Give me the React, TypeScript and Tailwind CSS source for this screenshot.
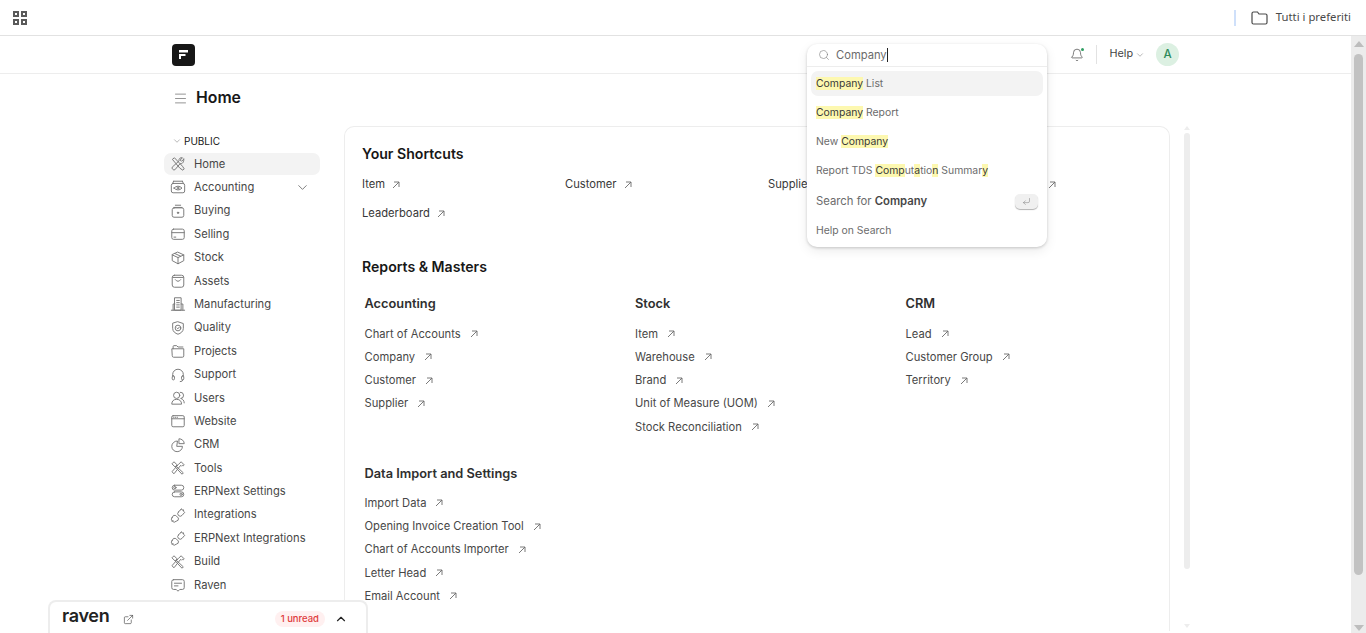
import React from "react";
import { ChevronDown, ChevronUp, ExternalLink, Search, Bell, CornerDownLeft, Menu } from "lucide-react";

function Ic({ children }: { children: React.ReactNode }) {
  return (
    <svg width="16" height="16" viewBox="0 0 18 18" fill="none" stroke="#7a7a7a" strokeWidth="1.1" strokeLinecap="round" strokeLinejoin="round" className="shrink-0">
      {children}
    </svg>
  );
}

const toolsPath = (
  <>
    <path d="M3 3.500l2-1.500 9 9.500 2 3-1.500 1.500-3-2z" />
    <path d="M15.500 3.500l-2.500 2.500-1.500-1.500 2.500-2.500c-2-.7-4.500 1-3.800 3.500L2.500 12.500c-1 1.500 1.500 4 3 3l6-7c2.500.7 4.500-2 4-5z" />
  </>
);

const hammerPath = (
  <>
    <path d="M2.500 4l2-2 3.500 3.500-2 2z" />
    <path d="M7 7l8 7.500-1.500 1.500-7.500-8" />
    <path d="M9.500 5l3-3 3.500 3.500-1 1-1-.5-1 1-1-1L4.500 15.500 2.500 13.500z" />
  </>
);

const plugPath = (
  <>
    <path d="M9.500 5.500l3-3 1 1 1.500-.5 .5 2 1 1-3 3.500a2.500 2.500 0 0 1-4-4z" />
    <path d="M2.500 11.500a3 3 0 0 1 4-2l3 3a3 3 0 0 1-2.500 3.500 3 3 0 0 1-4.500-4.500z" />
    <path d="M2.500 16l1-1M12 3l1-1" />
  </>
);

const sidebarItems: { label: string; icon: React.ReactNode; active?: boolean; chevron?: boolean }[] = [
  { label: "Home", active: true, icon: toolsPath },
  {
    label: "Accounting",
    chevron: true,
    icon: (
      <>
        <rect x="1.500" y="5" width="15" height="10.500" rx="2" />
        <path d="M4 2.500h10M3 5l1-2.500M15 5l-1-2.500" />
        <path d="M4.500 10.200q4.500-4.400 9 0q-4.500 4.400-9 0z" />
        <circle cx="9" cy="10.200" r="1" />
      </>
    ),
  },
  {
    label: "Buying",
    icon: (
      <>
        <path d="M6 2.500h6M4.500 5h9" />
        <rect x="2.500" y="5.500" width="13" height="10.500" rx="2" />
        <circle cx="9" cy="11" r=".8" fill="#7a7a7a" />
      </>
    ),
  },
  {
    label: "Selling",
    icon: (
      <>
        <rect x="2" y="3.500" width="14" height="11.500" rx="2" />
        <path d="M2 7.500h14M4.500 12.500h2" />
      </>
    ),
  },
  {
    label: "Stock",
    icon: (
      <>
        <path d="M9 2.500l6.500 3v6.500L9 15.500 2.500 12V5.500z" />
        <path d="M2.500 5.500L9 8.500l6.500-3M9 8.500v7M5.500 4l6.500 3" />
      </>
    ),
  },
  {
    label: "Assets",
    icon: (
      <>
        <rect x="2.500" y="2.500" width="13" height="13.500" rx="2.500" />
        <path d="M3 5h12M6 7.500q3 4 6 0" />
      </>
    ),
  },
  {
    label: "Manufacturing",
    icon: (
      <>
        <rect x="5.500" y="2" width="7" height="14" />
        <path d="M5.500 9H3.500v7M12.500 9h2v7M1.500 16h15M7.500 5h3M7.500 7.500h3M7.500 10h3M7.500 12.500h3" />
      </>
    ),
  },
  {
    label: "Quality",
    icon: (
      <>
        <path d="M9 2l6 2v5.500c0 3.500-3 5.500-6 6.500-3-1-6-3-6-6.500V4z" />
        <circle cx="9" cy="9" r="3.200" />
        <path d="M7.800 9l1 1 1.500-1.800" />
      </>
    ),
  },
  {
    label: "Projects",
    icon: (
      <>
        <path d="M2.500 6.500h13v8a1.500 1.500 0 0 1-1.500 1.500H4a1.500 1.500 0 0 1-1.500-1.500z" />
        <path d="M3.500 6.500V4a1 1 0 0 1 1-1h3l1.500 1.500h5.500" />
      </>
    ),
  },
  {
    label: "Support",
    icon: (
      <>
        <path d="M3 10V8.500a6 6 0 0 1 12 0V10" />
        <rect x="2.500" y="10" width="2.500" height="4.500" rx="1.200" />
        <rect x="13" y="10" width="2.500" height="4.500" rx="1.200" />
        <path d="M14.500 14.500q0 2-3 2" />
      </>
    ),
  },
  {
    label: "Users",
    icon: (
      <>
        <circle cx="7.500" cy="6" r="3.500" />
        <path d="M2 15.500c0-3 2-5 5.500-5s5.500 2 5.500 5zM11.500 2.500a3.500 3.500 0 0 1 .5 7c2.500.5 4 2.500 4 5" />
      </>
    ),
  },
  {
    label: "Website",
    icon: (
      <>
        <rect x="2" y="3" width="14" height="12.500" rx="1.500" />
        <path d="M2 6.500h14M4 4.800h.5M6 4.800h.5M8 4.800h.5" />
      </>
    ),
  },
  {
    label: "CRM",
    icon: (
      <>
        <path d="M8 4.500a6 6 0 1 0 6 6H8z" />
        <path d="M10.500 2a5.500 5.500 0 0 1 5.500 5.500h-5.500z" />
      </>
    ),
  },
  { label: "Tools", icon: hammerPath },
  {
    label: "ERPNext Settings",
    icon: (
      <>
        <rect x="2.500" y="2.500" width="13" height="5.500" rx="2.700" />
        <rect x="2.500" y="10" width="13" height="5.500" rx="2.700" />
        <circle cx="5.500" cy="5.200" r="1.300" />
        <circle cx="12.500" cy="12.700" r="1.300" />
      </>
    ),
  },
  { label: "Integrations", icon: plugPath },
  { label: "ERPNext Integrations", icon: plugPath },
  { label: "Build", icon: hammerPath },
  {
    label: "Raven",
    icon: (
      <>
        <path d="M4 3h10a2 2 0 0 1 2 2v7a2 2 0 0 1-2 2h-3l-2 2-2-2H4a2 2 0 0 1-2-2V5a2 2 0 0 1 2-2z" />
        <path d="M5 7h8M5 10h4" />
      </>
    ),
  },
];

function Arrow() {
  return (
    <svg width="8" height="8" viewBox="0 0 8 8" fill="none" stroke="#6b6b6b" strokeWidth="0.9" className="shrink-0">
      <path d="M1 7L7 1M2 1h5v5" />
    </svg>
  );
}

function LinkRow({ label }: { label: string }) {
  return (
    <div className="flex h-[23.25px] items-center gap-[9px] text-[#474747]">
      <span>{label}</span>
      <Arrow />
    </div>
  );
}

function LinkGroup({ title, links, tight }: { title: string; links: string[]; tight?: boolean }) {
  return (
    <div className="w-[270.5px] shrink-0">
      <h3 className={`whitespace-nowrap text-[12.8px] leading-5 font-semibold text-[#2f2f2f] ${tight ? "mb-[8px]" : "mb-[9px]"}`}>{title}</h3>
      {links.map((l) => (
        <LinkRow key={l} label={l} />
      ))}
    </div>
  );
}

function Hl({ children }: { children: React.ReactNode }) {
  return <mark className="bg-[#fdf8b0] text-[#383838]">{children}</mark>;
}

function SearchDropdown() {
  const rowClass = "mx-[4px] flex h-[29px] items-center px-[5px]";
  return (
    <div className="absolute top-[8px] left-[807px] z-20 w-[240px] rounded-[10px] bg-white pb-[2px] text-[10.4px] text-[#6b6b6b] shadow-[0_1px_3px_rgba(0,0,0,0.18),0_4px_12px_rgba(0,0,0,0.08)]">
      <div className="flex h-[23px] items-center gap-[6px] border-b border-[#ededed] px-[11px] text-[11.2px]">
        <Search size={12} strokeWidth={1.2} className="text-[#7c7c7c]" />
        <span className="border-r border-[#222] leading-[14px]">Company</span>
      </div>
      <div className="pt-[4px]">
        <div className="mx-[4px] flex h-[25px] items-center rounded-[7px] bg-[#f3f3f3] px-[5px]">
          <span><Hl>Company</Hl> List</span>
        </div>
        <div className={`${rowClass} mt-[2px]`}>
          <span><Hl>Company</Hl> Report</span>
        </div>
        <div className={rowClass}>
          <span>New <Hl>Company</Hl></span>
        </div>
        <div className={rowClass}>
          <span>Report TDS <Hl>Comp</Hl>ut<Hl>a</Hl>tio<Hl>n</Hl> Summar<Hl>y</Hl></span>
        </div>
        <div className="mx-[4px] flex h-[32px] items-center justify-between px-[5px] pt-[1px] text-[11.3px]">
          <span>Search for <b className="font-semibold text-[#474747]">Company</b></span>
          <span className="flex h-[15px] w-[23px] items-center justify-center rounded-[5px] bg-[#f0f0f0] shadow-[0_1px_1px_rgba(0,0,0,0.3)]">
            <CornerDownLeft size={9} strokeWidth={1.3} className="text-[#777]" />
          </span>
        </div>
        <div className={`${rowClass} -mt-[1px]`}>
          <span>Help on Search</span>
        </div>
      </div>
    </div>
  );
}

function ScrollArrow({ up, small }: { up?: boolean; small?: boolean }) {
  const size = small ? "border-x-[3px]" : "border-x-[5px]";
  if (up) {
    return <div className={`h-0 w-0 border-x-transparent ${size} ${small ? "border-b-[4px] border-b-[#ededed]" : "border-b-[6px] border-b-[#bdbdbd]"}`} />;
  }
  return <div className={`h-0 w-0 border-x-transparent ${size} ${small ? "border-t-[4px] border-t-[#ededed]" : "border-t-[6px] border-t-[#bdbdbd]"}`} />;
}

export default function App() {
  return (
    <div className="flex h-[633px] w-[1366px] flex-col overflow-hidden bg-white font-['Inter',sans-serif] text-[12px] text-[#383838]">
      {/* browser favourites bar */}
      <div className="flex h-[36px] shrink-0 items-center border-b border-[#e2e2e2] pr-[15px] pl-[13px]">
        <div className="grid grid-cols-2 gap-[2px]">
          {[0, 1, 2, 3].map((i) => (
            <span key={i} className="h-[6px] w-[6px] border-[2px] border-[#5a5a5a]" />
          ))}
        </div>
        <span className="ml-auto h-[16px] w-[2px] bg-[#cfe0fa]" />
        <svg width="17" height="14" viewBox="0 0 17 14" fill="none" stroke="#4a4a4a" strokeWidth="1.2" className="mr-[8px] ml-[15px]">
          <path d="M1 2.500a1.500 1.500 0 0 1 1.500-1.500h4l1.500 2h6.500a1.500 1.500 0 0 1 1.500 1.500v7a1.500 1.500 0 0 1-1.500 1.500h-12a1.500 1.500 0 0 1-1.500-1.500z" />
        </svg>
        <span className="font-['Noto_Sans',sans-serif] text-[11.3px] text-[#4a4a4a]">Tutti i preferiti</span>
      </div>

      <div className="flex min-h-0 flex-1">
        <div className="relative min-w-0 flex-1">
          {/* navbar */}
          <div className="flex h-[38px] items-center border-b border-[#ededed] px-[172px]">
            <div className="flex h-[22px] w-[23px] items-center justify-center rounded-[4px] bg-[#171717]">
              <svg width="11" height="11" viewBox="0 0 11 11" fill="#fff">
                <rect x="1" y="1" width="9" height="2.500" />
                <rect x="1" y="5" width="6.500" height="2" />
                <rect x="1" y="5" width="2" height="5" />
              </svg>
            </div>
            <div className="ml-auto flex items-center">
              <span className="relative">
                <Bell size={14} strokeWidth={1.2} className="text-[#444]" />
                <span className="absolute top-0 right-0 h-[3px] w-[3px] rounded-full bg-[#2f9e62]" />
              </span>
              <span className="mx-[12px] h-[19px] w-px bg-[#e2e2e2]" />
              <span className="text-[10.8px] text-[#444]">Help</span>
              <ChevronDown size={10} strokeWidth={1} className="mr-[11px] ml-[2px] text-[#555]" />
              <span className="flex h-[23px] w-[23px] items-center justify-center rounded-full bg-[#dcf0e2] text-[11.5px] font-medium text-[#2f8a5b]">A</span>
            </div>
          </div>

          <SearchDropdown />

          <div className="pl-[164px]">
            {/* page head */}
            <div className="flex h-[52px] items-center pb-[4px] pl-[9px]">
              <Menu size={15} strokeWidth={1} className="text-[#555]" />
              <h1 className="ml-[8px] text-[15.8px] font-semibold text-[#171717]">Home</h1>
            </div>

            <div className="flex items-start">
              {/* sidebar */}
              <aside className="w-[156px] shrink-0 pt-[8px]">
                <div className="flex h-[14px] items-center pl-[8px] text-[10px] text-[#171717]">
                  <ChevronDown size={10} strokeWidth={1} className="mr-[2px] text-[#555]" />
                  PUBLIC
                </div>
                <div className="mt-[5px] flex flex-col gap-[1.4px]">
                  {sidebarItems.map((item) => (
                    <div key={item.label} className={`flex h-[22px] items-center gap-[6px] rounded-[7px] pr-[10px] pl-[6px] text-[#474747] ${item.active ? "bg-[#f3f3f3]" : ""}`}>
                      <Ic>{item.icon}</Ic>
                      <span className="ml-[2px] whitespace-nowrap text-[11.2px]">{item.label}</span>
                      {item.chevron && <ChevronDown size={15} strokeWidth={1.1} className="ml-auto text-[#444]" />}
                    </div>
                  ))}
                </div>
              </aside>

              {/* workspace card */}
              <main className="ml-[24px] h-[505px] w-[826px] shrink-0 rounded-t-[10px] border-x border-t border-[#ededed] pt-[16px] pr-[17px] pl-[17px] text-[11.2px]">
                <h2 className="text-[14.1px] leading-[22px] font-semibold text-[#171717]">Your Shortcuts</h2>
                <div className="mt-[8px] grid grid-cols-[repeat(4,203px)] gap-y-[5.5px] text-[#383838]">
                  {["Item", "Customer", "Supplier", "Sales Invoice", "Leaderboard"].map((s) => (
                    <div key={s} className="flex h-[23.5px] items-center gap-[7px]">
                      <span>{s}</span>
                      <Arrow />
                    </div>
                  ))}
                </div>
                <h2 className="mt-[30px] text-[14.1px] leading-[22px] font-semibold text-[#171717]">Reports &amp; Masters</h2>
                <div className="mt-[16px] flex pl-[2.5px]">
                  <LinkGroup title="Accounting" links={["Chart of Accounts", "Company", "Customer", "Supplier"]} />
                  <LinkGroup title="Stock" links={["Item", "Warehouse", "Brand", "Unit of Measure (UOM)", "Stock Reconciliation"]} />
                  <LinkGroup title="CRM" links={["Lead", "Customer Group", "Territory"]} />
                </div>
                <div className="mt-[25px] pl-[2.5px]">
                  <LinkGroup tight title="Data Import and Settings" links={["Import Data", "Opening Invoice Creation Tool", "Chart of Accounts Importer", "Letter Head", "Email Account"]} />
                </div>
              </main>

              {/* workspace scrollbar */}
              <div className="ml-[14px] flex h-[505px] w-[6px] flex-col items-center">
                <ScrollArrow up small />
                <div className="mt-[3px] h-[436px] w-[6px] rounded-full bg-[#ededed]" />
                <div className="mt-auto mb-[3px]">
                  <ScrollArrow small />
                </div>
              </div>
            </div>
          </div>

          {/* raven chat bar */}
          <div className="absolute top-[564px] left-[48px] z-10 flex h-[40px] w-[320px] items-start rounded-t-[8px] border-x-2 border-t-2 border-[#ededed] bg-white pt-[4px] pr-[18px] pl-[12px]">
            <span className="text-[18px] leading-[20px] font-semibold tracking-[-0.3px] text-[#222]">raven</span>
            <ExternalLink size={11} strokeWidth={1.4} className="mt-[8px] ml-[14px] text-[#444]" />
            <span className="mt-[5px] ml-auto rounded-full bg-[#fff0f0] px-[6px] py-[1px] text-[9.5px] font-medium text-[#e03b3b]">1 unread</span>
            <ChevronUp size={14} strokeWidth={2} className="mt-[6px] ml-[9px] text-[#222]" />
          </div>
        </div>

        {/* page scrollbar */}
        <div className="flex w-[15px] shrink-0 flex-col items-center bg-[#ececec] pt-[5px] pb-[2px]">
          <ScrollArrow up />
          <div className="mt-[7px] h-[521px] w-[9px] rounded-full bg-[#c2c2c2]" />
          <div className="mt-auto">
            <ScrollArrow />
          </div>
        </div>
      </div>
    </div>
  );
}
